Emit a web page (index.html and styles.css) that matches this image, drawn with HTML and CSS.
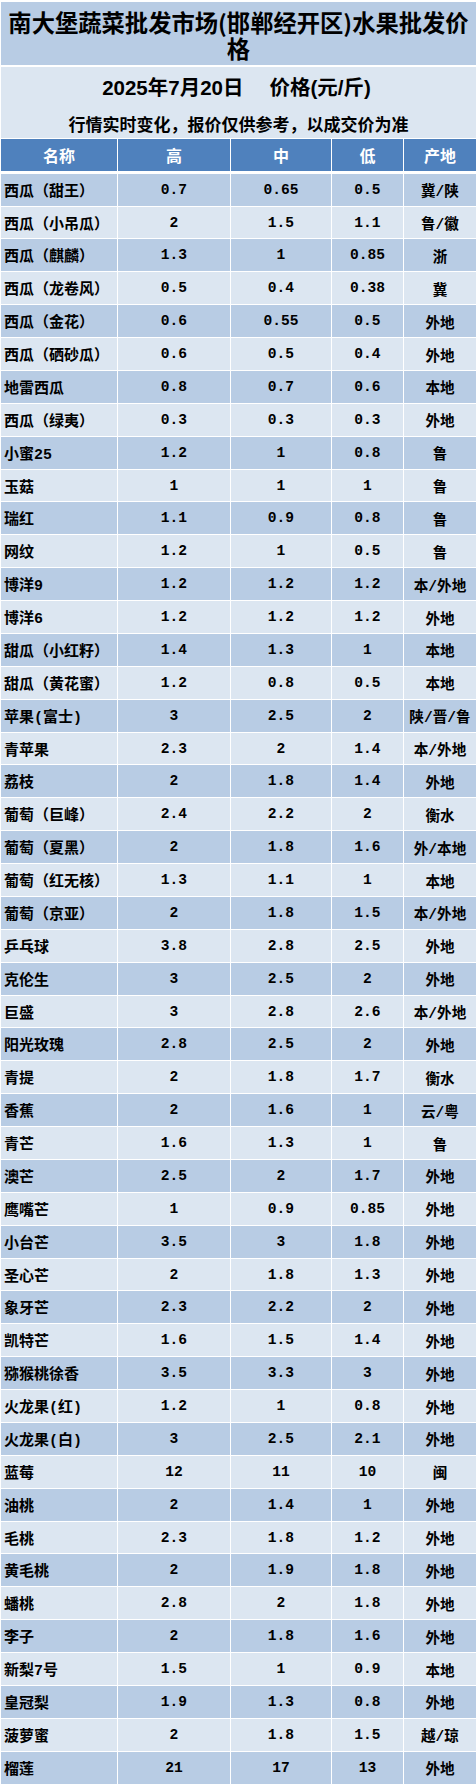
FILE: index.html
```html
<!DOCTYPE html>
<html lang="zh-CN">
<head>
<meta charset="utf-8">
<title>水果批发价格</title>
<link rel="stylesheet" href="styles.css">
</head>
<body>
<div class="page">
  <div class="title">南大堡蔬菜批发市场(邯郸经开区)水果批发价格</div>
  <div class="sub">
    <div class="date"><span>2025年7月20日</span><span class="unit">价格(元/斤)</span></div>
    <div class="note">行情实时变化，报价仅供参考，以成交价为准</div>
  </div>
  <div class="head">
    <div>名称</div><div>高</div><div>中</div><div>低</div><div>产地</div>
  </div>
  <div class="rows">
    <div class="row"><div class="name">西瓜（甜王）</div><div>0.7</div><div>0.65</div><div>0.5</div><div>冀/陕</div></div>
    <div class="row"><div class="name">西瓜（小吊瓜）</div><div>2</div><div>1.5</div><div>1.1</div><div>鲁/徽</div></div>
    <div class="row"><div class="name">西瓜（麒麟）</div><div>1.3</div><div>1</div><div>0.85</div><div>浙</div></div>
    <div class="row"><div class="name">西瓜（龙卷风）</div><div>0.5</div><div>0.4</div><div>0.38</div><div>冀</div></div>
    <div class="row"><div class="name">西瓜（金花）</div><div>0.6</div><div>0.55</div><div>0.5</div><div>外地</div></div>
    <div class="row"><div class="name">西瓜（硒砂瓜）</div><div>0.6</div><div>0.5</div><div>0.4</div><div>外地</div></div>
    <div class="row"><div class="name">地雷西瓜</div><div>0.8</div><div>0.7</div><div>0.6</div><div>本地</div></div>
    <div class="row"><div class="name">西瓜（绿夷）</div><div>0.3</div><div>0.3</div><div>0.3</div><div>外地</div></div>
    <div class="row"><div class="name">小蜜25</div><div>1.2</div><div>1</div><div>0.8</div><div>鲁</div></div>
    <div class="row"><div class="name">玉菇</div><div>1</div><div>1</div><div>1</div><div>鲁</div></div>
    <div class="row"><div class="name">瑞红</div><div>1.1</div><div>0.9</div><div>0.8</div><div>鲁</div></div>
    <div class="row"><div class="name">网纹</div><div>1.2</div><div>1</div><div>0.5</div><div>鲁</div></div>
    <div class="row"><div class="name">博洋9</div><div>1.2</div><div>1.2</div><div>1.2</div><div>本/外地</div></div>
    <div class="row"><div class="name">博洋6</div><div>1.2</div><div>1.2</div><div>1.2</div><div>外地</div></div>
    <div class="row"><div class="name">甜瓜（小红籽）</div><div>1.4</div><div>1.3</div><div>1</div><div>本地</div></div>
    <div class="row"><div class="name">甜瓜（黄花蜜）</div><div>1.2</div><div>0.8</div><div>0.5</div><div>本地</div></div>
    <div class="row"><div class="name">苹果(富士)</div><div>3</div><div>2.5</div><div>2</div><div>陕/晋/鲁</div></div>
    <div class="row"><div class="name">青苹果</div><div>2.3</div><div>2</div><div>1.4</div><div>本/外地</div></div>
    <div class="row"><div class="name">荔枝</div><div>2</div><div>1.8</div><div>1.4</div><div>外地</div></div>
    <div class="row"><div class="name">葡萄（巨峰）</div><div>2.4</div><div>2.2</div><div>2</div><div>衡水</div></div>
    <div class="row"><div class="name">葡萄（夏黑）</div><div>2</div><div>1.8</div><div>1.6</div><div>外/本地</div></div>
    <div class="row"><div class="name">葡萄（红无核）</div><div>1.3</div><div>1.1</div><div>1</div><div>本地</div></div>
    <div class="row"><div class="name">葡萄（京亚）</div><div>2</div><div>1.8</div><div>1.5</div><div>本/外地</div></div>
    <div class="row"><div class="name">乒乓球</div><div>3.8</div><div>2.8</div><div>2.5</div><div>外地</div></div>
    <div class="row"><div class="name">克伦生</div><div>3</div><div>2.5</div><div>2</div><div>外地</div></div>
    <div class="row"><div class="name">巨盛</div><div>3</div><div>2.8</div><div>2.6</div><div>本/外地</div></div>
    <div class="row"><div class="name">阳光玫瑰</div><div>2.8</div><div>2.5</div><div>2</div><div>外地</div></div>
    <div class="row"><div class="name">青提</div><div>2</div><div>1.8</div><div>1.7</div><div>衡水</div></div>
    <div class="row"><div class="name">香蕉</div><div>2</div><div>1.6</div><div>1</div><div>云/粤</div></div>
    <div class="row"><div class="name">青芒</div><div>1.6</div><div>1.3</div><div>1</div><div>鲁</div></div>
    <div class="row"><div class="name">澳芒</div><div>2.5</div><div>2</div><div>1.7</div><div>外地</div></div>
    <div class="row"><div class="name">鹰嘴芒</div><div>1</div><div>0.9</div><div>0.85</div><div>外地</div></div>
    <div class="row"><div class="name">小台芒</div><div>3.5</div><div>3</div><div>1.8</div><div>外地</div></div>
    <div class="row"><div class="name">圣心芒</div><div>2</div><div>1.8</div><div>1.3</div><div>外地</div></div>
    <div class="row"><div class="name">象牙芒</div><div>2.3</div><div>2.2</div><div>2</div><div>外地</div></div>
    <div class="row"><div class="name">凯特芒</div><div>1.6</div><div>1.5</div><div>1.4</div><div>外地</div></div>
    <div class="row"><div class="name">猕猴桃徐香</div><div>3.5</div><div>3.3</div><div>3</div><div>外地</div></div>
    <div class="row"><div class="name">火龙果(红)</div><div>1.2</div><div>1</div><div>0.8</div><div>外地</div></div>
    <div class="row"><div class="name">火龙果(白)</div><div>3</div><div>2.5</div><div>2.1</div><div>外地</div></div>
    <div class="row"><div class="name">蓝莓</div><div>12</div><div>11</div><div>10</div><div>闽</div></div>
    <div class="row"><div class="name">油桃</div><div>2</div><div>1.4</div><div>1</div><div>外地</div></div>
    <div class="row"><div class="name">毛桃</div><div>2.3</div><div>1.8</div><div>1.2</div><div>外地</div></div>
    <div class="row"><div class="name">黄毛桃</div><div>2</div><div>1.9</div><div>1.8</div><div>外地</div></div>
    <div class="row"><div class="name">蟠桃</div><div>2.8</div><div>2</div><div>1.8</div><div>外地</div></div>
    <div class="row"><div class="name">李子</div><div>2</div><div>1.8</div><div>1.6</div><div>外地</div></div>
    <div class="row"><div class="name">新梨7号</div><div>1.5</div><div>1</div><div>0.9</div><div>本地</div></div>
    <div class="row"><div class="name">皇冠梨</div><div>1.9</div><div>1.3</div><div>0.8</div><div>外地</div></div>
    <div class="row"><div class="name">菠萝蜜</div><div>2</div><div>1.8</div><div>1.5</div><div>越/琼</div></div>
    <div class="row"><div class="name">榴莲</div><div>21</div><div>17</div><div>13</div><div>外地</div></div>
  </div>
</div>
</body>
</html>
```

FILE: styles.css
```css
html, body {
  margin: 0;
  padding: 0;
  background: #ffffff;
}

.page {
  width: 475px;
  padding: 2px 0 0 1px;
  font-family: "Noto Sans CJK SC", "Liberation Sans", sans-serif;
  font-weight: bold;
  color: #000000;
}

.title {
  box-sizing: border-box;
  height: 63px;
  padding: 8px 6px 0;
  background: #b8cce4;
  font-size: 23.3px;
  line-height: 25.5px;
  text-align: center;
}

.sub {
  box-sizing: border-box;
  height: 71px;
  margin-top: 2px;
  padding-top: 7px;
  background: #dce6f1;
  display: flex;
  flex-direction: column;
  align-items: center;
  gap: 10px;
}

.date {
  font-family: "Liberation Sans", "Noto Sans CJK SC", sans-serif;
  font-size: 20.5px;
  line-height: 28px;
  display: flex;
  gap: 26px;
  padding-right: 4px;
}

.note {
  font-size: 17px;
  line-height: 24px;
}

.head,
.row {
  display: grid;
  grid-template-columns: 116px 112px 100px 71px 72px;
  column-gap: 1px;
}

.head {
  margin-top: 1px;
  height: 31.7px;
}

.head > div {
  background: #4f81bd;
  color: #ffffff;
  font-size: 16px;
  display: flex;
  align-items: center;
  justify-content: center;
}

.rows {
  margin-top: 3px;
  display: flex;
  flex-direction: column;
  gap: 1px;
}

.row {
  height: 31.88px;
  font-family: "Liberation Mono", "Noto Sans CJK SC", monospace;
  font-size: 14.6px;
}

.row > div {
  display: flex;
  align-items: center;
  justify-content: center;
  white-space: nowrap;
  background: #dce6f1;
}

.row:nth-child(odd) > div {
  background: #b8cce4;
}

.row > .name {
  justify-content: flex-start;
  padding-left: 3px;
  font-size: 15px;
}
```
